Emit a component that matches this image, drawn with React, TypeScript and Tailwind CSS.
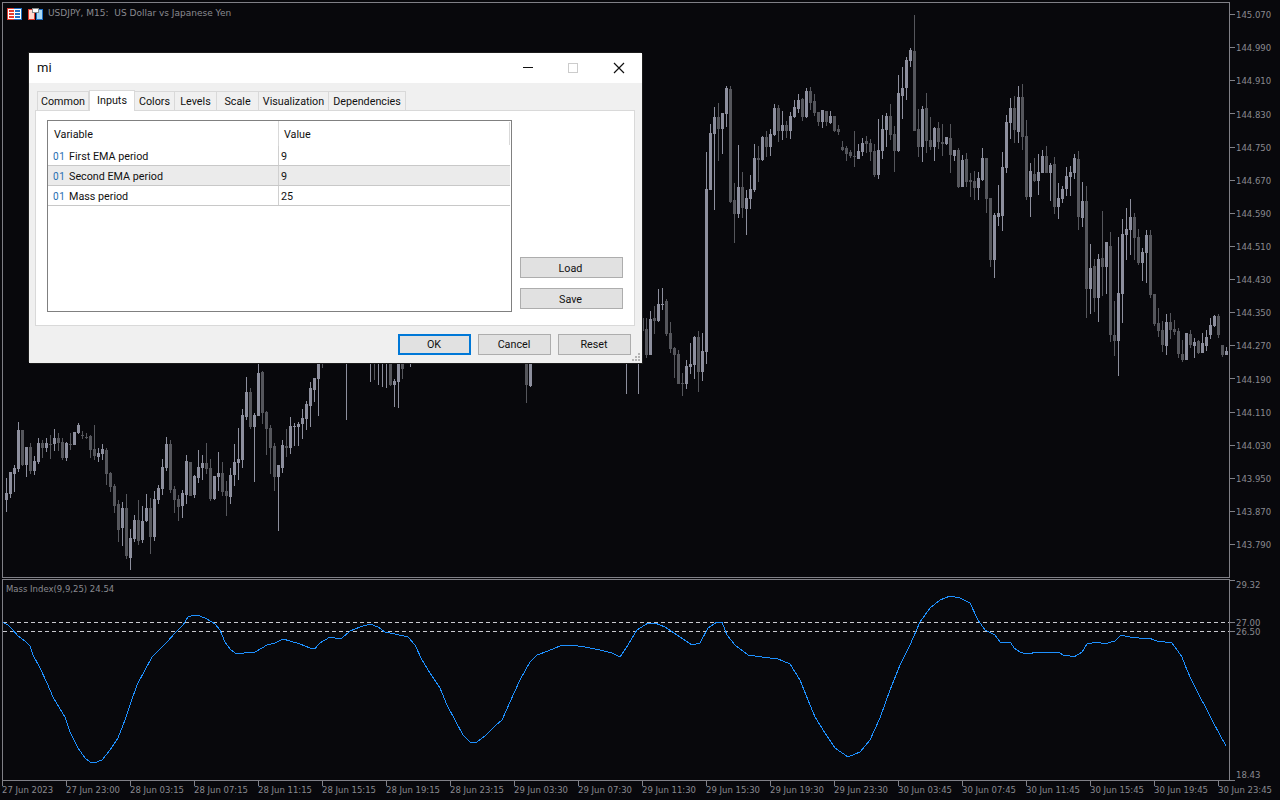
import React from "react";

type Row = [number, number, number, number, number];
// rows: [wickTop, bodyTop, bodyBottom, wickBottom, light?1:0], measured at 3x with a y offset
const blocks: { k: number; off: number; rows: Row[] }[] = [
  { k: 0, off: 340, rows: [
    [415,460,480,516,1],[395,397,462,474,1],[376,385,402,456,1],[246,270,388,396,1],[270,270,376,378,0],[321,321,375,410,1],[310,321,393,402,0],[349,363,393,405,1],[294,309,366,372,1],[300,309,324,354,0],
    [295,309,324,335,1],[285,312,315,357,0],[267,294,312,333,1],[279,294,309,333,0],[294,306,354,360,0],[306,309,354,362,1],[279,311,314,330,0],[276,276,315,315,1],[250,255,279,282,1],[274,284,288,297,0],
    [280,290,293,297,0],[285,288,330,354,0],[255,327,348,360,0],[325,339,351,366,1],[312,327,342,360,1],[324,330,402,435,0],[396,399,441,456,0],[432,438,498,519,0],[480,492,570,606,0],[486,504,564,618,1],
    [462,504,648,657,0],[567,594,654,690,1],[526,540,597,606,1],[480,540,603,615,0],[498,543,600,609,1],[462,504,543,546,1],[474,504,591,642,0],[453,477,591,603,1],[436,444,480,492,1],[357,381,447,465,1],
    [292,312,384,393,1],[300,312,450,459,0],[438,447,480,519,0],[465,477,501,543,0],[450,459,498,534,1],[345,363,465,492,1],[366,366,468,468,0],[405,408,465,474,1],[330,381,414,429,1],[345,369,384,420,1],
    [309,369,387,402,0],[357,384,477,483,0],[408,408,477,480,1],[336,399,411,453,1],[366,399,456,468,0],[423,453,468,528,0],[384,405,471,492,1],[312,366,405,438,1],[264,357,369,420,1],[207,225,360,384,1],
    [111,156,231,240,1],[144,156,261,267,0],[220,225,261,426,1],[60,99,228,228,1],[94,96,219,252,0],[213,216,267,345,0],[255,264,324,402,0],[309,318,411,453,0],[375,375,411,573,1],[300,315,384,399,1],
    [267,319,324,351,0],[231,258,324,342,1],[249,258,261,318,1],[246,252,261,318,1],[207,234,252,297,1],[183,192,237,270,1],[126,144,198,261,1],[114,114,150,186,1],[60,60,117,228,1],
  ]},
  { k: 159, off: 190, rows: [
    [351,384,423,423,0],[384,417,495,504,0],[363,387,495,495,1],[348,384,393,432,0],[297,342,393,396,1],[294,343,346,360,1],[327,333,432,438,0],[396,429,477,489,0],[471,474,495,564,0],[480,492,582,582,0],
    [549,579,582,618,0],[510,528,582,597,1],[459,522,531,552,1],[438,441,525,567,1],[423,441,546,606,0],[429,483,546,573,1],
  ]},
  { k: 175, off: 0, rows: [
    [456,567,1056,1092,1],[372,399,570,570,1],[321,351,402,630,1],[309,351,387,483,0],[339,339,387,462,1],[258,264,342,381,1],[258,267,606,609,0],[549,600,642,729,0],[435,561,642,654,1],[516,561,624,654,0],
    [570,594,627,705,1],[525,567,597,627,1],[432,474,570,576,1],[438,474,480,546,0],[408,411,480,483,1],[393,411,441,471,0],[387,402,441,468,1],[312,324,405,408,1],[315,324,393,426,0],[333,375,393,420,1],
    [363,375,393,414,0],[336,348,393,417,1],[300,321,351,354,1],[282,300,327,339,1],[294,297,351,363,0],[264,273,351,354,1],[261,273,309,330,0],[282,303,339,348,0],[336,336,366,378,0],[330,330,366,384,1],
    [333,333,366,378,0],[333,348,369,372,1],[348,348,393,396,0],[375,387,396,405,0],[423,441,450,453,0],[438,444,462,483,0],[450,456,468,474,0],[393,468,471,501,0],[432,453,477,477,1],[414,429,456,468,1],
    [408,423,432,459,0],[417,429,456,483,0],[432,453,525,531,0],[357,450,525,537,1],[345,387,453,477,1],[339,348,390,441,1],[312,348,405,420,0],[378,402,453,516,0],[225,279,453,456,1],[201,264,288,357,1],
    [171,180,264,300,1],[144,150,183,201,1],[45,153,393,393,0],[327,387,441,471,0],[318,327,441,486,1],[279,324,423,459,0],[351,420,441,450,0],[381,384,441,483,1],[366,384,426,447,0],[372,426,432,468,0],
    [411,411,432,435,1],[372,414,465,519,0],[450,450,468,483,1],[444,450,561,564,0],[465,480,561,561,1],[459,477,546,561,0],[519,540,546,591,0],[513,543,564,600,0],[516,534,564,600,1],[444,474,540,543,1],
    [474,474,597,639,0],[594,594,780,801,0],[639,645,780,834,1],[555,639,651,678,1],[456,501,648,693,1],[345,366,504,519,1],[294,324,369,417,1],[288,324,390,429,0],[258,291,396,429,1],[252,291,411,450,0],
    [360,408,591,600,0],[489,513,591,651,1],[474,522,543,546,0],[462,516,543,585,1],[450,468,519,519,1],[438,468,519,519,0],[489,495,519,603,1],[471,492,621,642,0],[549,594,621,657,1],[558,567,597,609,1],
    [501,528,567,588,1],[498,516,531,588,1],[462,474,519,537,1],[453,477,651,690,0],[546,603,654,681,1],
  ]},
  { k: 270, off: 190, rows: [
    [-12,33,297,384,0],[162,234,297,372,1],[207,228,324,366,0],[192,207,324,396,1],[63,204,231,318,0],[156,156,231,312,1],[126,168,435,456,0],[333,435,453,498,0],[141,309,453,558,1],[87,132,312,399,1],
    [54,117,135,210,1],[27,81,120,195,1],[69,81,144,210,0],[117,141,219,225,0],[174,186,219,273,1],[120,135,189,279,1],[120,135,315,324,0],[312,312,402,408,0],[354,399,423,441,0],[393,420,465,486,0],
    [372,396,468,495,1],[369,396,420,447,0],[390,417,426,435,0],[414,423,492,504,0],[450,492,510,516,0],[429,429,510,510,1],[420,432,465,474,0],[444,456,468,504,1],[450,453,489,492,0],[429,459,489,489,1],
    [420,441,468,483,1],[384,405,435,447,1],[375,378,408,411,1],[372,378,435,444,0],[465,465,495,501,0],[471,483,495,495,1],
  ]},
];

// Candles that only show below the dialog, given in real pixels: [k, wickTop, bodyTop, bodyBottom, wickBottom, light]
const under: [number, number, number, number, number, number][] = [
  [79,350,350,350,368,0],[85,350,350,350,420,1],[91,350,350,350,382,1],[92,350,350,350,380,0],[93,350,350,350,385,1],[94,350,350,350,387,1],[95,350,350,350,388,1],
  [96,350,350,385,386,0],[97,379,381,385,407,1],[98,350,350,382,408,1],[99,350,350,369,379,0],[101,350,350,350,367,1],
  [130,350,350,385,403,0],[131,350,350,386,387,1],[155,350,350,350,394,1],[158,350,350,350,394,1],
];

const candles: { x: number; wt: number; bt: number; bb: number; wb: number; c: string }[] = [];
const LIGHT = "#8d8f9e";
const DARK = "#55565c";
for (const b of blocks) {
  b.rows.forEach((r, i) => {
    candles.push({
      x: 5 + 4 * (b.k + i),
      wt: Math.round(b.off + r[0] / 3),
      bt: Math.round(b.off + r[1] / 3),
      bb: Math.round(b.off + r[2] / 3),
      wb: Math.round(b.off + r[3] / 3),
      c: r[4] ? LIGHT : DARK,
    });
  });
}
for (const u of under) {
  candles.push({ x: 5 + 4 * u[0], wt: u[1], bt: u[2], bb: u[3], wb: u[4], c: u[5] ? LIGHT : DARK });
}

const massLine =
  "3,622.5 8,625 12,629 18,636 25,641 30,646 33,655 40,668 47,683 53,697 60,709 65,717 70,732 78,748 85,758 90,762 94,763 102,760 110,750 118,738 125,720 130,705 137,685 145,670 152,657 158,651 167,642 175,633 183,625 188,617 192,615.5 200,616 207,619 215,624 220,630 225,642 230,649 235,653 242,653.5 247,652 255,652 262,648 267,645 275,643 283,639 290,641 300,644 310,648 315,648.5 320,643 330,637 335,638 342,638 350,631 360,627 370,624 378,627 385,632 395,634 408,637 415,645 422,660 430,673 440,688 447,705 455,720 463,735 470,742 477,742 485,736 495,726 502,720 510,702 520,680 530,662 537,655 548,651 560,646 570,645 585,647 600,650 612,653 620,657 628,645 637,630 648,623 655,623 665,627 680,637 692,645 700,643 708,628 717,622 722,622 727,635 735,645 748,655 762,657 778,659 790,664 800,680 808,700 815,717 825,733 835,748 848,757 860,752 870,740 880,718 890,690 900,665 910,645 920,622 930,608 940,600 950,596 960,598 970,603 978,620 985,630 995,635 1000,642 1011,643 1014,648 1020,652 1023,653 1030,653.5 1035,652.5 1040,653 1055,652 1060,653 1063,655 1070,656 1074,657 1082,652 1087,644 1092,643 1098,642.5 1106,644 1112,641.5 1115,641 1120,636 1123,635.5 1130,637 1137,637.5 1142,639 1150,638.5 1157,641 1165,642 1172,643 1175,647 1182,657 1187,670 1192,681 1200,697 1206,708 1212,720 1220,735 1226,746";

const prices = ["145.070","144.990","144.910","144.830","144.750","144.670","144.590","144.510","144.430","144.350","144.270","144.190","144.110","144.030","143.950","143.870","143.790"];
const times = ["27 Jun 2023","27 Jun 23:00","28 Jun 03:15","28 Jun 07:15","28 Jun 11:15","28 Jun 15:15","28 Jun 19:15","28 Jun 23:15","29 Jun 03:30","29 Jun 07:30","29 Jun 11:30","29 Jun 15:30","29 Jun 19:30","29 Jun 23:30","30 Jun 03:45","30 Jun 07:45","30 Jun 11:45","30 Jun 15:45","30 Jun 19:45","30 Jun 23:45"];
const tabs: [string, string][] = [["Common","w-[52px]"],["Inputs","w-[46px]"],["Colors","w-[40px]"],["Levels","w-[42px]"],["Scale","w-[42px]"],["Visualization","w-[70px]"],["Dependencies","w-[77px]"]];
const rows: [string, string, boolean][] = [["First EMA period","9",false],["Second EMA period","9",true],["Mass period","25",false]];

function Btn({ label }: { label: string }) {
  return <div className="flex items-center justify-center bg-[#e1e1e1] border border-[#adadad] h-[21px] w-[103px] pt-[3px] pr-[2px] text-[#111]">{label}</div>;
}

function FootBtn({ label, primary }: { label: string; primary?: boolean }) {
  return (
    <div className={`flex items-center justify-center bg-[#e1e1e1] h-[21px] w-[73px] pt-[2px] pr-[1px] text-[#111] ${primary ? "border-2 border-[#0078d7]" : "border border-[#adadad]"}`}>{label}</div>
  );
}

export default function App() {
  return (
    <div className="relative w-[1280px] h-[800px] overflow-hidden bg-[#08080c] pl-[2px] pt-[2px] text-[#8a8a90] text-[8.5px] [font-family:'DejaVu_Sans',sans-serif]">
      <div className="flex h-[576px]">
        <div className="relative w-[1228px] h-[576px] border border-[#808087]">
          <svg className="block" width="1226" height="574" viewBox="3 3 1226 574" shapeRendering="crispEdges">
            {candles.map((c, i) => (
              <g key={i} fill={c.c}>
                <rect x={c.x + 1} y={c.wt} width={1} height={Math.max(1, c.wb - c.wt)} />
                <rect x={c.x} y={c.bt} width={3} height={Math.max(1, c.bb - c.bt)} />
              </g>
            ))}
          </svg>
          <div className="absolute left-[4px] top-[4px] flex items-center h-[14px] text-[9px]">
            <svg width="15" height="12" viewBox="0 0 15 12" shapeRendering="crispEdges" className="mr-[6px]">
              <rect x="0" y="0" width="7" height="12" fill="#e03c31" />
              <rect x="7" y="0" width="8" height="12" fill="#1f6fc4" />
              <rect x="1" y="1" width="13" height="10" fill="#fff" />
              <rect x="2" y="2" width="5" height="2" fill="#e03c31" />
              <rect x="2" y="5" width="5" height="2" fill="#e03c31" />
              <rect x="2" y="8" width="5" height="2" fill="#e03c31" />
              <rect x="8" y="2" width="5" height="2" fill="#1f6fc4" />
              <rect x="8" y="5" width="5" height="2" fill="#1f6fc4" />
              <rect x="8" y="8" width="5" height="2" fill="#1f6fc4" />
            </svg>
            <svg width="15" height="12" viewBox="0 0 15 12" shapeRendering="crispEdges" className="mr-[5px]">
              <rect x="0" y="1" width="7" height="11" fill="#e03c31" />
              <rect x="8" y="1" width="7" height="11" fill="#1f6fc4" />
              <rect x="1" y="2" width="5" height="9" fill="#ffd9d0" />
              <rect x="9" y="2" width="5" height="9" fill="#a9d8f5" />
              <rect x="4" y="0" width="7" height="5" fill="#8a8a8a" />
              <rect x="5" y="1" width="5" height="3" fill="#fff" />
              <rect x="7" y="5" width="1" height="7" fill="#08080c" />
            </svg>
            <span className="whitespace-pre">USDJPY, M15:  US Dollar vs Japanese Yen</span>
          </div>
        </div>
        <div className="flex flex-col gap-[21.125px] pt-[6.5px]">
          {prices.map((p) => (
            <div key={p} className="flex items-center h-[12px]">
              <div className="w-[5px] h-px bg-[#808087] mr-[1px]" />
              <span className="relative top-px">{p}</span>
            </div>
          ))}
        </div>
      </div>

      <div className="flex h-[202px] mt-px">
        <div className="relative w-[1228px] h-[202px] border border-[#808087]">
          <svg className="block" width="1226" height="200" viewBox="3 580 1226 200" shapeRendering="crispEdges">
            <line x1="3" x2="1229" y1="622.5" y2="622.5" stroke="#c9c9cf" strokeWidth="1" strokeDasharray="4 3" />
            <line x1="3" x2="1229" y1="631.5" y2="631.5" stroke="#c9c9cf" strokeWidth="1" strokeDasharray="4 3" />
            <polyline points={massLine} fill="none" stroke="#1e90ff" strokeWidth="1" />
          </svg>
          <span className="absolute left-[3px] top-[3px]">Mass Index(9,9,25) 24.54</span>
        </div>
        <div className="flex flex-col">
          <div className="flex items-center h-[12px] mb-[27px]"><div className="w-[5px] h-px bg-[#808087] mr-[1px] self-start mt-px" /><span>29.32</span></div>
          <div className="flex items-center h-[9px]"><div className="w-[5px] h-px bg-[#808087] mr-[1px]" /><span className="relative top-px">27.00</span></div>
          <div className="flex items-center h-[9px]"><div className="w-[5px] h-px bg-[#808087] mr-[1px]" /><span className="relative top-px">26.50</span></div>
          <div className="flex items-center h-[12px] mt-[132px]"><div className="w-[5px] mr-[1px]" /><span className="relative top-px">18.43</span></div>
          <div className="w-[5px] h-px bg-[#808087]" />
        </div>
      </div>

      <div className="flex">
        {times.map((t) => (
          <div key={t} className="relative w-[64px] shrink-0 h-[17px] pt-[2px] whitespace-nowrap">
            <div className="absolute left-0 top-0 w-px h-[5px] bg-[#808087]" />
            <span className="relative top-[1px]">{t}</span>
          </div>
        ))}
      </div>

      <div className="absolute left-[29px] top-[53px] w-[613px] h-[310px] flex flex-col bg-[#f0f0f0] shadow-[1px_1px_0_#1c1c1c,-1px_-1px_0_#1c1c1c] text-[#111] text-[10.75px] [font-family:'Roboto','Noto_Sans',sans-serif]">
        <div className="flex items-center h-[30px] bg-white pl-[8px] shrink-0">
          <span className="flex-1 text-[13px] text-[#111]">mi</span>
          <svg width="110" height="14" viewBox="0 0 110 14" shapeRendering="crispEdges" className="mr-[9px]">
            <rect x="0" y="6" width="10" height="1" fill="#111" />
            <rect x="45.5" y="2.5" width="9" height="9" fill="none" stroke="#ccc" />
            <path d="M91 2 L101 12 M101 2 L91 12" stroke="#111" strokeWidth="1.2" shapeRendering="auto" />
          </svg>
        </div>
        <div className="flex-1 flex flex-col px-[6px] pt-[8px] relative">
          <div className="flex h-[19px] pl-[2px] relative z-10">
            {tabs.map(([t, w], i) => (
              <div
                key={t}
                className={`${w} flex items-center justify-center border-t border-r border-[#d9d9d9] ${i === 0 ? "border-l" : ""} ${i === 1 ? "bg-white h-[21px] -mt-[1px] border-l" : "h-[19px] bg-[#f0f0f0] pt-[2px]"}`}
              >
                {t}
              </div>
            ))}
          </div>
          <div className="h-[216px] w-[600px] bg-white border border-[#d9d9d9] flex pl-[11px] pt-[9px]">
            <div className="w-[465px] h-[192px] border border-[#808080] shrink-0">
              <div className="flex h-[25px] items-center">
                <div className="w-[231px] pl-[6px] pt-[4px] border-r border-[#d9d9d9] h-full flex items-center">Variable</div>
                <div className="flex-1 pl-[5px] pt-[4px]">Value</div>
                <div className="w-px h-[23px] bg-[#d9d9d9] mr-[1px]" />
              </div>
              {rows.map(([n, v, hl]) => (
                <div key={n} className={`flex h-[20px] border-b border-[#c8c8c8] mr-[1px] ${hl ? "bg-[#ebebeb]" : ""}`}>
                  <div className="w-[231px] flex items-center border-r border-[#d0d0d0] pl-[5px] pt-[3px]">
                    <span className="text-[#1f6fb2] text-[10px] w-[16px] tracking-[0.6px] -mt-[2px]">01</span>
                    <span>{n}</span>
                  </div>
                  <div className="pl-[2px] pt-[3px] flex items-center">{v}</div>
                </div>
              ))}
            </div>
            <div className="flex flex-col pl-[8px] pt-[137px] gap-[10px]">
              <Btn label="Load" />
              <Btn label="Save" />
            </div>
          </div>
          <div className="flex justify-end gap-[7px] pr-[5px] pt-[8px]">
            <FootBtn label="OK" primary />
            <FootBtn label="Cancel" />
            <FootBtn label="Reset" />
          </div>
          <svg className="absolute right-[2px] bottom-[2px]" width="8" height="8" viewBox="0 0 8 8" shapeRendering="crispEdges" fill="#b4b4b4">
            <rect x="6" y="0" width="2" height="2" />
            <rect x="3" y="3" width="2" height="2" />
            <rect x="6" y="3" width="2" height="2" />
            <rect x="0" y="6" width="2" height="2" />
            <rect x="3" y="6" width="2" height="2" />
            <rect x="6" y="6" width="2" height="2" />
          </svg>
        </div>
      </div>
    </div>
  );
}
